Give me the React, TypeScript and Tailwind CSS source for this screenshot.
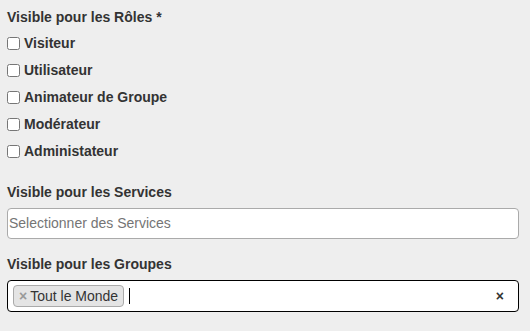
export default function App() {
  const roles = ["Visiteur", "Utilisateur", "Animateur de Groupe", "Modérateur", "Administateur"];
  return (
    <div className="min-h-[331px] w-[530px] bg-[#eeeeee] pl-[7px] pr-[11px] pt-[8px] font-['Liberation_Sans',Arial,sans-serif] text-[14px] text-[#333333]">
      <div className="font-bold leading-[18px]">Visible pour les Rôles *</div>
      <div className="mt-[8px] flex flex-col gap-[9px]">
        {roles.map((r) => (
          <label key={r} className="flex h-[18px] items-center gap-[4px] font-bold">
            <input type="checkbox" className="m-0 h-[13px] w-[13px]" />
            <span>{r}</span>
          </label>
        ))}
      </div>
      <div className="mt-[23px] font-bold leading-[18px]">Visible pour les Services</div>
      <div className="mt-[7px] flex h-[31px] items-center rounded-[4px] border border-[#aaaaaa] bg-white px-[1px]">
        <span className="text-[#757575]">Selectionner des Services</span>
      </div>
      <div className="mt-[16px] font-bold leading-[18px]">Visible pour les Groupes</div>
      <div className="mt-[7px] flex h-[32px] items-center rounded-[4px] border border-black bg-white pl-[5px] pr-[14px]">
        <span className="flex h-[22px] items-center rounded-[4px] border border-[#aaaaaa] bg-[#e4e4e4] pl-[5px] pr-[5px]">
          <span className="mr-[3px] font-bold text-[#999999]">×</span>
          <span className="font-normal">Tout le Monde</span>
        </span>
        <span className="ml-[5px] h-[16px] w-px bg-black" />
        <span className="ml-auto font-bold text-[#333333]">×</span>
      </div>
    </div>
  );
}
